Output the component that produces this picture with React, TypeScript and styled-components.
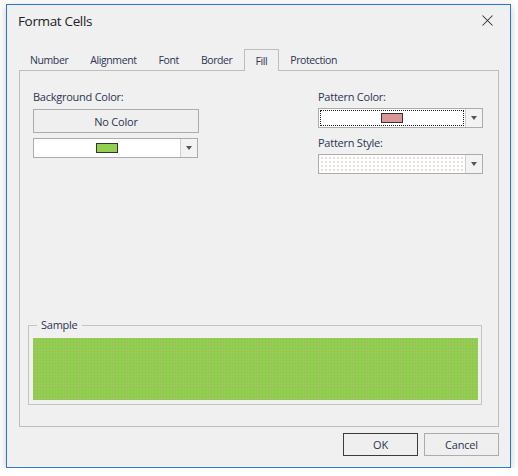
import React from 'react';
import styled, { createGlobalStyle } from 'styled-components';

const GlobalStyle = createGlobalStyle`
  html, body { margin: 0; padding: 0; background: #fff; }
  body { font-family: 'Segoe UI', 'Open Sans', 'Noto Sans', sans-serif; font-size: 11px; color: #2b2b3a; }
`;

// window frame
const Window = styled.div`
  margin: 4px 0 0 6px; width: 505px; height: 464px; box-sizing: border-box;
  border: 1px solid #2a7ad2; background: #f0f0f0; box-shadow: 0 2px 8px rgba(0,0,0,0.22);
  display: flex; flex-direction: column;
`;

const TitleBar = styled.div`
  height: 31px; display: flex; align-items: center; justify-content: space-between; padding: 0 12px 0 11px;
`;

const Title = styled.div`
  font-size: 13.5px; color: #222; letter-spacing: -0.35px;
`;

const CloseBtn = styled.div`
  width: 12px; height: 12px; display: flex; align-items: center; justify-content: center; margin-right: 5px;
`;

const Tabs = styled.div`
  display: flex; height: 21px; margin: 13px 0 0 12px; align-items: flex-end; position: relative; z-index: 1;
`;

const Tab = styled.div<{ $active?: boolean }>`
  height: 21px; box-sizing: border-box; padding: 0 10px; display: flex; align-items: center;
  color: #2b3550; font-size: 10.5px; letter-spacing: -0.4px;
  border: 1px solid ${(p) => (p.$active ? '#bdbdbd' : 'transparent')};
  border-bottom: none; background: #f0f0f0;
  ${(p) => (p.$active ? 'height: 22px; margin-bottom: -1px; padding: 0 11px;' : '')}
`;

const Panel = styled.div`
  margin: 0 0 0 12px; width: 480px; height: 357px; box-sizing: border-box; border: 1px solid #bdbdbd;
  display: flex; flex-direction: column; padding: 0 0 0 8px;
`;

const Columns = styled.div`
  display: grid; grid-template-columns: 166px 165px; column-gap: 119px; padding: 17px 0 0 5px;
`;

const Col = styled.div`
  display: flex; flex-direction: column;
`;

const Gap = styled.div<{ $h: number }>`
  height: ${(p) => p.$h}px; flex: none;
`;

const Label = styled.div`
  color: #2b3550; height: 17px; line-height: 17px; letter-spacing: -0.25px;
`;

const PlainBtn = styled.div<{ $dark?: boolean; $w?: number; $h?: number }>`
  width: ${(p) => p.$w || 166}px; height: ${(p) => p.$h || 24}px; box-sizing: border-box;
  border: 1px solid ${(p) => (p.$dark ? '#3c3c3c' : '#acacac')}; background: #efefef;
  display: flex; align-items: center; justify-content: center; color: #2b3550; letter-spacing: -0.2px;
`;

const Combo = styled.div`
  width: 165px; height: 20px; box-sizing: border-box; border: 1px solid #acacac; display: flex; background: #fff;
`;

const ComboField = styled.div<{ $focus?: boolean; $pattern?: boolean }>`
  flex: 1; display: flex; align-items: center; justify-content: center; margin: 1px;
  ${(p) => (p.$focus ? 'outline: 1px dotted #222; outline-offset: -1px;' : '')}
  ${(p) =>
    p.$pattern
      ? 'background-image: radial-gradient(#d9b3b3 0.6px, transparent 0.8px); background-size: 4px 4px;'
      : ''}
`;

const ComboArrow = styled.div`
  width: 16px; border-left: 1px solid #cfcfcf; background: #f3f3f3; display: flex; align-items: center; justify-content: center;
  &::after { content: ''; border-left: 3.5px solid transparent; border-right: 3.5px solid transparent; border-top: 4px solid #555; }
`;

const Swatch = styled.div<{ $color: string }>`
  width: 20px; height: 8px; border: 1px solid #333; background: ${(p) => p.$color};
`;

const Group = styled.fieldset`
  margin: auto 0 21px 0; width: 454px; height: 87px; box-sizing: border-box; border: 1px solid #c4c4c4;
  padding: 0 3px 0 4px; min-width: 0;
  legend { padding: 0 4px; margin-left: 4px; color: #2b3550; font-size: 11px; line-height: 14px; letter-spacing: -0.25px; }
`;

const SampleFill = styled.div`
  height: 62px; margin-top: 6px; background-color: #8fd04d;
  background-image: radial-gradient(rgba(215,120,170,0.55) 0.5px, transparent 0.9px);
  background-size: 3px 3px;
`;

const Footer = styled.div`
  display: flex; justify-content: flex-end; gap: 6px; padding: 6px 11px 0 0;
`;

const App = () => {
  return (
    <>
      <GlobalStyle />
      <Window>
        <TitleBar>
          <Title>Format Cells</Title>
          <CloseBtn>
            <svg width="11" height="11" viewBox="0 0 11 11">
              <path d="M0.5 0.5 L10.5 10.5 M10.5 0.5 L0.5 10.5" stroke="#333" strokeWidth="1.05" />
            </svg>
          </CloseBtn>
        </TitleBar>
        <Tabs>
          <Tab>Number</Tab>
          <Tab>Alignment</Tab>
          <Tab>Font</Tab>
          <Tab>Border</Tab>
          <Tab $active>Fill</Tab>
          <Tab>Protection</Tab>
        </Tabs>
        <Panel>
          <Columns>
            <Col>
              <Label>Background Color:</Label>
              <Gap $h={4} />
              <PlainBtn>No Color</PlainBtn>
              <Gap $h={5} />
              <Combo>
                <ComboField>
                  <Swatch $color="#92d050" />
                </ComboField>
                <ComboArrow />
              </Combo>
            </Col>
            <Col>
              <Label>Pattern Color:</Label>
              <Gap $h={3} />
              <Combo>
                <ComboField $focus>
                  <Swatch $color="#da9694" />
                </ComboField>
                <ComboArrow />
              </Combo>
              <Gap $h={6} />
              <Label>Pattern Style:</Label>
              <Gap $h={3} />
              <Combo>
                <ComboField $pattern />
                <ComboArrow />
              </Combo>
            </Col>
          </Columns>
          <Group>
            <legend>Sample</legend>
            <SampleFill />
          </Group>
        </Panel>
        <Footer>
          <PlainBtn $dark $w={75} $h={23}>OK</PlainBtn>
          <PlainBtn $w={75} $h={23}>Cancel</PlainBtn>
        </Footer>
      </Window>
    </>
  );
};

export default App;
